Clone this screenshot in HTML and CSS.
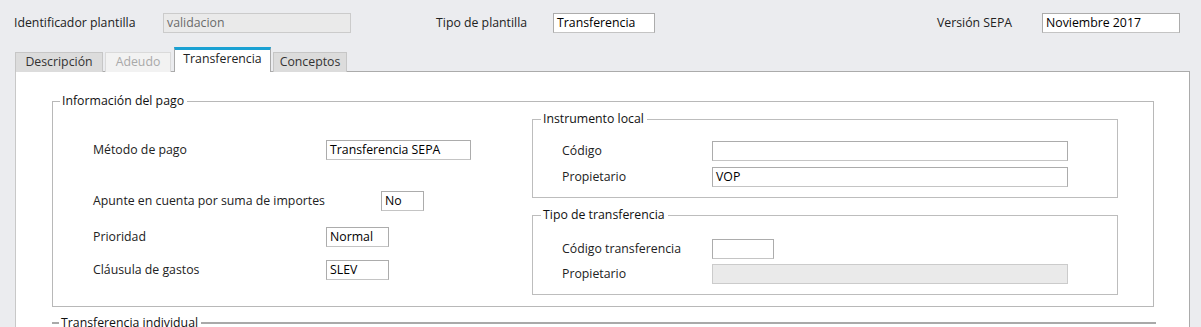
FILE: index.html
```html
<!DOCTYPE html>
<html lang="es">
<head>
    <meta charset="UTF-8">
    <title>Plantilla SEPA</title>
    <link rel="stylesheet" href="styles.css">
</head>
<body>
    <div class="header">
        <div class="group group-id">
            <span class="label w-id">Identificador plantilla</span>
            <span class="input disabled w-id-input">validacion</span>
        </div>
        <div class="group group-tipo">
            <span class="label w-tipo">Tipo de plantilla</span>
            <span class="input w-tipo-input">Transferencia</span>
        </div>
        <div class="group group-version">
            <span class="label w-version">Versión SEPA</span>
            <span class="input w-version-input">Noviembre 2017</span>
        </div>
    </div>

    <div class="tabs">
        <div class="tab tab-desc">Descripción</div>
        <div class="tab tab-adeudo disabled-tab">Adeudo</div>
        <div class="tab tab-transf active">Transferencia</div>
        <div class="tab tab-conceptos">Conceptos</div>
    </div>

    <div class="panel">
        <fieldset class="box box-info">
            <legend>Información del pago</legend>
            <div class="info-body">
                <div class="left-col">
                    <div class="row row-metodo">
                        <span class="label w-left">Método de pago</span>
                        <span class="input w-metodo">Transferencia SEPA</span>
                    </div>
                    <div class="row row-apunte">
                        <span class="label w-apunte">Apunte en cuenta por suma de importes</span>
                        <span class="input w-no">No</span>
                    </div>
                    <div class="row row-prioridad">
                        <span class="label w-left">Prioridad</span>
                        <span class="input w-short">Normal</span>
                    </div>
                    <div class="row row-clausula">
                        <span class="label w-left">Cláusula de gastos</span>
                        <span class="input w-short">SLEV</span>
                    </div>
                </div>

                <div class="right-col">
                    <fieldset class="box box-instrumento">
                        <legend>Instrumento local</legend>
                        <div class="row row-codigo">
                            <span class="label w-right">Código</span>
                            <span class="input w-long"></span>
                        </div>
                        <div class="row row-prop">
                            <span class="label w-right">Propietario</span>
                            <span class="input w-long">VOP</span>
                        </div>
                    </fieldset>

                    <fieldset class="box box-tipo">
                        <legend>Tipo de transferencia</legend>
                        <div class="row row-codtrans">
                            <span class="label w-right">Código transferencia</span>
                            <span class="input w-code"></span>
                        </div>
                        <div class="row row-prop2">
                            <span class="label w-right">Propietario</span>
                            <span class="input disabled w-long"></span>
                        </div>
                    </fieldset>
                </div>
            </div>
        </fieldset>

        <fieldset class="box box-individual">
            <legend>Transferencia individual</legend>
        </fieldset>
    </div>
</body>
</html>
```

FILE: styles.css
```css
html, body {
    margin: 0;
    padding: 0;
}

body {
    width: 1201px;
    height: 327px;
    overflow: hidden;
    background: #ebecef;
    font-family: 'Open Sans', 'Noto Sans', sans-serif;
    font-size: 12.3px;
    line-height: 16px;
    color: #222;
}

/* Cabecera */
.header {
    display: flex;
    padding: 13px 0 0 14px;
    height: 20px;
}

.group {
    display: flex;
    align-items: center;
}

.group-tipo {
    margin-left: 85px;
}

.group-version {
    margin-left: 282px;
}

.label {
    white-space: nowrap;
}

.w-id { width: 149px; }
.w-id-input { width: 188px; }
.w-tipo { width: 117px; }
.w-tipo-input { width: 102px; }
.w-version { width: 105px; }
.w-version-input { width: 138px; }

.input {
    display: block;
    box-sizing: border-box;
    height: 20px;
    padding: 1px 3px 0;
    border: 1px solid #acacac;
    border-bottom-color: #c4c4c4;
    background: #fff;
    color: #000;
    white-space: nowrap;
    line-height: 16px;
}

.input.disabled {
    background: #eaeaea;
    border-color: #cbcbcb;
    color: #6a6a6a;
}

/* Pestañas */
.tabs {
    display: flex;
    align-items: flex-end;
    height: 25px;
    margin: 14px 0 -1px 15px;
}

.tab {
    box-sizing: border-box;
    height: 20px;
    margin-right: 2px;
    border: 1px solid #c6c6c6;
    border-bottom: none;
    background: #dcdcdc;
    color: #333;
    text-align: center;
    line-height: 18px;
    font-size: 12.3px;
}

.tab-desc { width: 88px; }
.tab-adeudo { width: 66px; margin-right: 3px; }
.tab-transf { width: 97px; }
.tab-conceptos { width: 74px; }

.disabled-tab {
    background: #f2f2f2;
    border-color: #dadada;
    color: #a9a9a9;
}

.tab.active {
    position: relative;
    z-index: 1;
    height: 25px;
    background: #fff;
    border-color: #a9a9a9;
    border-top: 3px solid #1aa1d3;
    line-height: 17px;
    color: #222;
}

/* Panel */
.panel {
    box-sizing: border-box;
    width: 1175px;
    height: 280px;
    margin-left: 15px;
    padding-top: 21px;
    background: #fff;
    border: 1px solid #ababab;
    border-left-color: #c8c8c8;
}

.box {
    margin: 0;
    padding: 0;
    border: 1px solid #bdbdbd;
    min-width: 0;
}

.box legend {
    margin-left: 7px;
    padding: 0 3px 0 2px;
    line-height: 16px;
    color: #111;
    font-size: 12.3px;
}

.box-info {
    box-sizing: border-box;
    width: 1102px;
    height: 214px;
    margin-left: 36px;
    border-color: #b8b8b8;
}

.info-body {
    display: flex;
}

.left-col {
    width: 479px;
    padding-left: 40px;
    box-sizing: border-box;
}

.row {
    display: flex;
    align-items: center;
    height: 20px;
}

.row-metodo { margin-top: 31px; }
.row-apunte { margin-top: 31px; }
.row-prioridad { margin-top: 16px; }
.row-clausula { margin-top: 13px; }

.w-left { width: 233px; }
.w-apunte { width: 288px; }
.w-metodo { width: 145px; }
.w-no { width: 43px; }
.w-short { width: 63px; }

.right-col {
    padding-top: 2px;
}

.box-instrumento,
.box-tipo {
    box-sizing: border-box;
    width: 586px;
    padding-left: 29px;
}

.box-instrumento legend,
.box-tipo legend {
    margin-left: -21px;
}

.box-instrumento {
    height: 87px;
}

.box-tipo {
    height: 88px;
    margin-top: 9px;
}

.w-right { width: 150px; }
.w-long { width: 356px; }
.w-code { width: 62px; }

.row-codigo { margin-top: 14px; }
.row-prop { margin-top: 6px; }
.row-codtrans { margin-top: 16px; }
.row-prop2 { margin-top: 5px; }

.box-individual {
    box-sizing: border-box;
    width: 1104px;
    height: 40px;
    margin: 8px 0 0 36px;
    border: none;
    border-top: 2px solid #a9a9a9;
}
```
